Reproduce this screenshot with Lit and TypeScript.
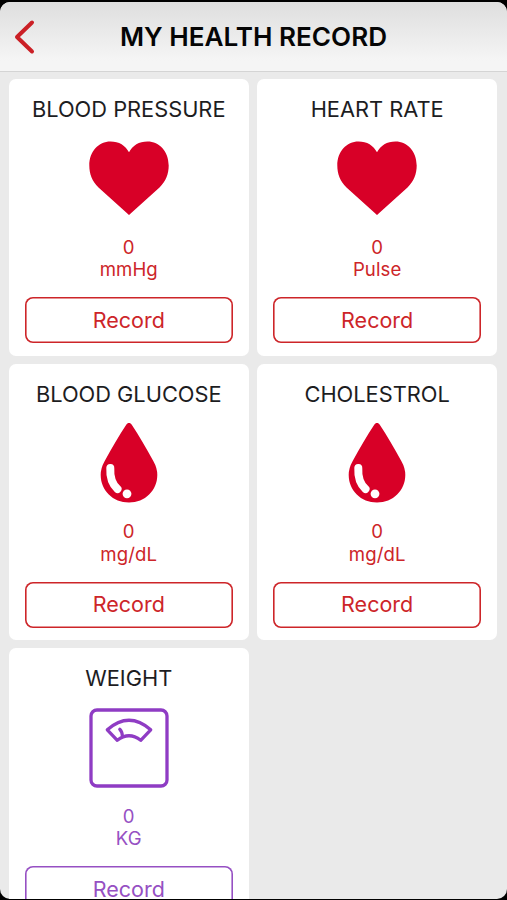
import { LitElement, html, css, svg } from "lit";
import { customElement, property } from "lit/decorators.js";

type Icon = "heart" | "drop" | "scale";

const icons = {
  heart: svg`<path fill="#d80027" d="M40 76 L9.500 48.500 C3 42 .3 35 .3 26.500 C.3 12.500 9.500 2.500 21.500 2.500 C30 2.500 36.500 6.500 40 13.300 C43.500 6.500 50 2.500 58.500 2.500 C70.500 2.500 79.700 12.500 79.700 26.500 C79.700 35 77 42 70.500 48.500 Z"/>`,
  drop: svg`<path fill="#d80027" d="M37.400 1.500 Q40 -1.700 42.600 1.500 C50 12.500 57 25 64.300 38 Q68.300 45 68.300 52 C68.300 67.500 56 79.500 40 79.500 C24 79.500 11.700 67.500 11.700 52 Q11.700 45 15.700 38 C23 25 30 12.500 37.400 1.500 Z"/>
    <path fill="none" stroke="#fff" stroke-width="8" stroke-linecap="round" d="M21.300 45 C20.800 54 23 61 28.500 66"/>
    <circle cx="38" cy="70.800" r="4.400" fill="#fff"/>`,
  scale: svg`<g fill="none" stroke="#8f3cc4" stroke-width="3.300" stroke-linejoin="round" stroke-linecap="round">
    <rect x="2" y="2" width="76" height="76" rx="6"/>
    <path d="M18.300 21.800 Q40 2.800 61.700 21.800 L51.700 32.300 Q40 23.300 28.300 32.300 Z"/>
    <path d="M30.800 21.300 Q33 23.300 33.500 28.300"/></g>`,
};

@customElement("record-card")
class RecordCard extends LitElement {
  @property() name = "";
  @property() unit = "";
  @property() icon: Icon = "heart";

  static styles = css`
    :host {
      display: flex;
      flex-direction: column;
      align-items: center;
      height: 276.500px;
      box-sizing: border-box;
      padding: 16px 16px 0;
      border-radius: 7px;
      background: #fff;
      color: #cd2529;
    }
    :host([icon="scale"]) { color: #9650c3; }
    .name {
      margin: 0;
      font-size: 21.800px;
      font-weight: 400;
      line-height: 28px;
      color: #1d1d1f;
      white-space: nowrap;
    }
    .icon { width: 80px; height: 80px; margin-top: 15.700px; display: block; }
    .reading { margin-top: 17.300px; font-size: 18.600px; line-height: 22.300px; text-align: center; letter-spacing: 0.100px; }
    .record {
      align-self: stretch;
      height: 46px;
      margin-top: 16.700px;
      box-sizing: border-box;
      border: 0;
      box-shadow: inset 0 0 0 1.600px currentColor;
      border-radius: 8px;
      background: none;
      color: inherit;
      font: 400 21.500px/1 Inter, sans-serif;
      padding: 0.600px 0 0;
    }
  `;

  render() {
    return html`
      <h2 class="name">${this.name}</h2>
      <svg class="icon" viewBox="0 0 80 80">${icons[this.icon]}</svg>
      <div class="reading"><div>0</div><div>${this.unit}</div></div>
      <button class="record">Record</button>
    `;
  }
}

const records: { name: string; unit: string; icon: Icon }[] = [
  { name: "BLOOD PRESSURE", unit: "mmHg", icon: "heart" },
  { name: "HEART RATE", unit: "Pulse", icon: "heart" },
  { name: "BLOOD GLUCOSE", unit: "mg/dL", icon: "drop" },
  { name: "CHOLESTROL", unit: "mg/dL", icon: "drop" },
  { name: "WEIGHT", unit: "KG", icon: "scale" },
];

@customElement("app-root")
class AppRoot extends LitElement {
  static styles = css`
    :host {
      display: block;
      height: 900px;
      box-sizing: border-box;
      padding: 1.500px 0 1px;
      background: #000;
      overflow: hidden;
      font-family: Inter, sans-serif;
    }
    .screen {
      height: 100%;
      border-radius: 10px;
      overflow: hidden;
      background: #eaeaea;
    }
    .bar {
      display: grid;
      grid-template-columns: 48px 1fr 48px;
      align-items: center;
      height: 70px;
      box-sizing: border-box;
      padding-top: 1px;
      border-bottom: 1.500px solid #d4d4d4;
      background: linear-gradient(#dedede, #f5f5f5 85%);
    }
    .back { width: 22px; height: 36px; margin-left: 14px; display: block; }
    .title {
      margin: 0;
      padding-top: 1px;
      font-size: 26.100px;
      font-weight: 600;
      line-height: 32px;
      text-align: center;
      white-space: nowrap;
      color: #050505;
    }
    .grid {
      display: grid;
      grid-template-columns: 240.500px 240.300px;
      gap: 8px;
      padding: 7.500px 0 0 8.500px;
    }
  `;

  render() {
    return html`
      <div class="screen">
        <header class="bar">
          <svg class="back" viewBox="0 0 22 36">
            <path d="M18 3.500 L3 18 L18 32.500" fill="none" stroke="#cb2026" stroke-width="4" stroke-linecap="round" stroke-linejoin="round"/>
          </svg>
          <h1 class="title">MY HEALTH RECORD</h1>
        </header>
        <main class="grid">
          ${records.map(r => html`<record-card name=${r.name} unit=${r.unit} icon=${r.icon}></record-card>`)}
        </main>
      </div>
    `;
  }
}
